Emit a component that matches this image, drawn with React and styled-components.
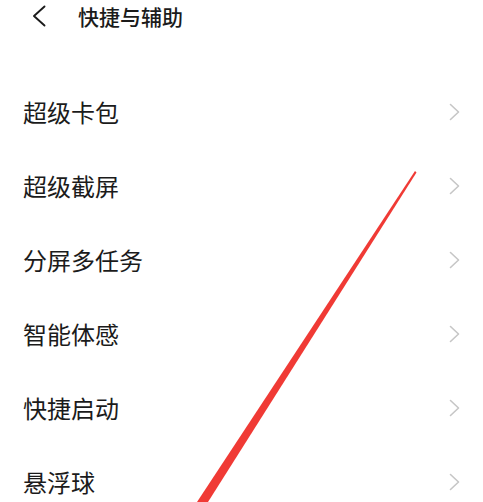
import React from 'react'
import styled, { createGlobalStyle } from 'styled-components'

const GlobalStyle = createGlobalStyle`
    html, body {
        margin: 0;
        padding: 0;
        background: #ffffff;
    }
    body {
        font-family: "Noto Sans CJK SC", "Noto Sans", sans-serif;
        color: #1b1b1b;
    }
`

const Page = styled.div`
    position: relative;
    width: 483px;
    height: 502px;
    overflow: hidden;
    background: #ffffff;
`

const Header = styled.div`
    display: flex;
    flex-direction: row;
    align-items: center;
    height: 32px;
    padding-left: 32px;
`

const BackButton = styled.div`
    display: flex;
    align-items: center;
    width: 14px;
    height: 22px;
    margin-right: 32px;
`

const Title = styled.h1`
    margin: 0;
    font-size: 21px;
    font-weight: 500;
    line-height: 1;
    color: #1b1b1b;
`

const List = styled.div`
    display: flex;
    flex-direction: column;
    padding-top: 43px;
`

const Row = styled.div`
    display: flex;
    flex-direction: row;
    align-items: center;
    justify-content: space-between;
    height: 74px;
    flex-shrink: 0;
    padding-left: 23px;
    padding-right: 23px;
`

const Label = styled.span`
    font-size: 24px;
    font-weight: 400;
    line-height: 1;
    color: #1b1b1b;
`

const Annotation = styled.svg`
    position: absolute;
    left: 0;
    top: 0;
    pointer-events: none;
`

const Chevron = () => (
    <svg width="11" height="18" viewBox="0 0 11 18">
        <path d="M1.5 1.5 L9.5 9 L1.5 16.5" fill="none" stroke="#c6c6c6" strokeWidth="1.6" strokeLinecap="round" strokeLinejoin="round" />
    </svg>
)

const items = ['超级卡包', '超级截屏', '分屏多任务', '智能体感', '快捷启动', '悬浮球']

const App = () => {
    return (
        <>
        <GlobalStyle />
        <Page>
            <Header>
                <BackButton>
                    <svg width="14" height="22" viewBox="0 0 14 22">
                        <path d="M12.5 1.5 L2 11 L12.5 20.5" fill="none" stroke="#1b1b1b" strokeWidth="1.9" strokeLinecap="round" strokeLinejoin="round" />
                    </svg>
                </BackButton>
                <Title>快捷与辅助</Title>
            </Header>
            <List>
                {items.map((item) => (
                    <Row key={item}>
                        <Label>{item}</Label>
                        <Chevron />
                    </Row>
                ))}
            </List>
            <Annotation width="483" height="502" viewBox="0 0 483 502">
                <polygon points="415,171 416.5,172.5 208,502 197,502" fill="#f03a35" />
            </Annotation>
        </Page>
        </>
    )
}

export default App
